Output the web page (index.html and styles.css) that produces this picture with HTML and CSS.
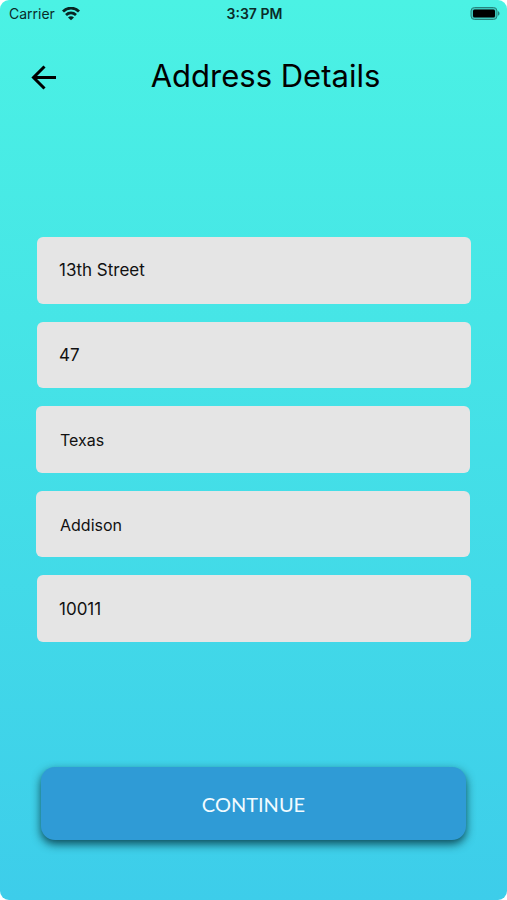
FILE: index.html
```html
<!DOCTYPE html>
<html lang="en">
<head>
<meta charset="utf-8">
<meta name="viewport" content="width=device-width, initial-scale=1">
<title>Address Details</title>
<link rel="stylesheet" href="styles.css">
</head>
<body>
<div class="screen">
  <div class="status">
    <div class="status-carrier">
      <span>Carrier</span>
      <svg class="wifi" viewBox="0 0 18 14" aria-hidden="true">
        <g fill="none" stroke="#082523" stroke-width="2.8">
          <path d="M1 4.500C5.500 0 12.500 0 17 4.500"/>
          <path d="M4 8C7 5.300 11 5.300 14 8"/>
        </g>
        <path d="M9 13.200L6 10.400C7.800 8.900 10.200 8.900 12 10.400Z" fill="#082523"/>
      </svg>
    </div>
    <span class="status-time">3:37 PM</span>
    <svg class="battery" viewBox="0 0 30 14" aria-hidden="true">
      <rect x="1" y="0.500" width="26" height="12" rx="3.500" fill="#3dc5bb" stroke="#26847d"/>
      <rect x="3" y="2.500" width="22" height="8" rx="1.500" fill="#000"/>
      <path d="M28 4.300C30 5 30 8 28 8.700Z" fill="#26847d"/>
    </svg>
  </div>
  <header class="header">
    <button class="back" type="button" aria-label="Back">
      <svg viewBox="0 0 28 28" aria-hidden="true">
        <path d="M26 15.500H4M14.500 4.500L3.500 15.500L14.500 26.500" fill="none" stroke="#000" stroke-width="3"/>
      </svg>
    </button>
    <h1 class="title">Address Details</h1>
  </header>
  <form class="form">
    <div class="fields">
      <input class="field" type="text" aria-label="Street" value="13th Street">
      <input class="field" type="text" aria-label="House number" value="47">
      <select class="field field-select" aria-label="State"><option>Texas</option></select>
      <select class="field field-select" aria-label="City"><option>Addison</option></select>
      <input class="field" type="text" aria-label="Zip code" value="10011">
    </div>
    <button class="continue" type="button">CONTINUE</button>
  </form>
</div>
</body>
</html>
```
FILE: styles.css
```css
* {
  box-sizing: border-box;
}

body {
  margin: 0;
  background: #fff;
  font-family: Inter, "Liberation Sans", sans-serif;
  color: #000;
}

.screen {
  display: flex;
  flex-direction: column;
  min-height: 100vh;
  border-radius: 9px;
  background: linear-gradient(#4bf2e4, #3dcdea);
}

.status {
  display: grid;
  grid-template-columns: 1fr auto 1fr;
  align-items: center;
  height: 27px;
  padding: 0 7px 0 9px;
  font-size: 14px;
  color: #0a2b29;
}

.status-carrier {
  display: flex;
  align-items: center;
  gap: 7px;
}

.wifi {
  width: 18px;
  height: 14px;
}

.status-time {
  font-weight: 600;
}

.battery {
  justify-self: end;
  width: 30px;
  height: 14px;
}

.header {
  display: flex;
  align-items: center;
  height: 97px;
  padding: 0 34px 0 30px;
}

.back {
  width: 28px;
  height: 28px;
  padding: 0;
  border: 0;
  background: none;
}

.back svg {
  display: block;
}

.title {
  flex: 1;
  margin: 0;
  font-size: 31px;
  font-weight: 400;
  text-align: center;
}

.form {
  flex: 1;
  display: flex;
  flex-direction: column;
  justify-content: space-between;
  padding: 113px 36px 60px;
}

.fields {
  display: grid;
  grid-auto-rows: 1fr;
  gap: 18px;
  min-height: 45vh;
}

.field {
  justify-self: end;
  width: calc(100% - 1px);
  min-height: 48px;
  padding: 0 22px;
  border: 0;
  border-radius: 6px;
  background: #e5e5e5;
  font: 17px Inter, "Liberation Sans", sans-serif;
  color: #111;
}

.field-select {
  justify-self: start;
  appearance: none;
  padding: 2px 24px 0;
  font-size: 16px;
}

.continue {
  height: 73px;
  margin: 0 5px;
  border: 0;
  border-radius: 14px;
  background: #2f9bd6;
  box-shadow: 0 4px 10px rgba(0, 40, 50, 0.8);
  font: 20px Lato, "Open Sans", sans-serif;
  color: #f2fbff;
}
```
